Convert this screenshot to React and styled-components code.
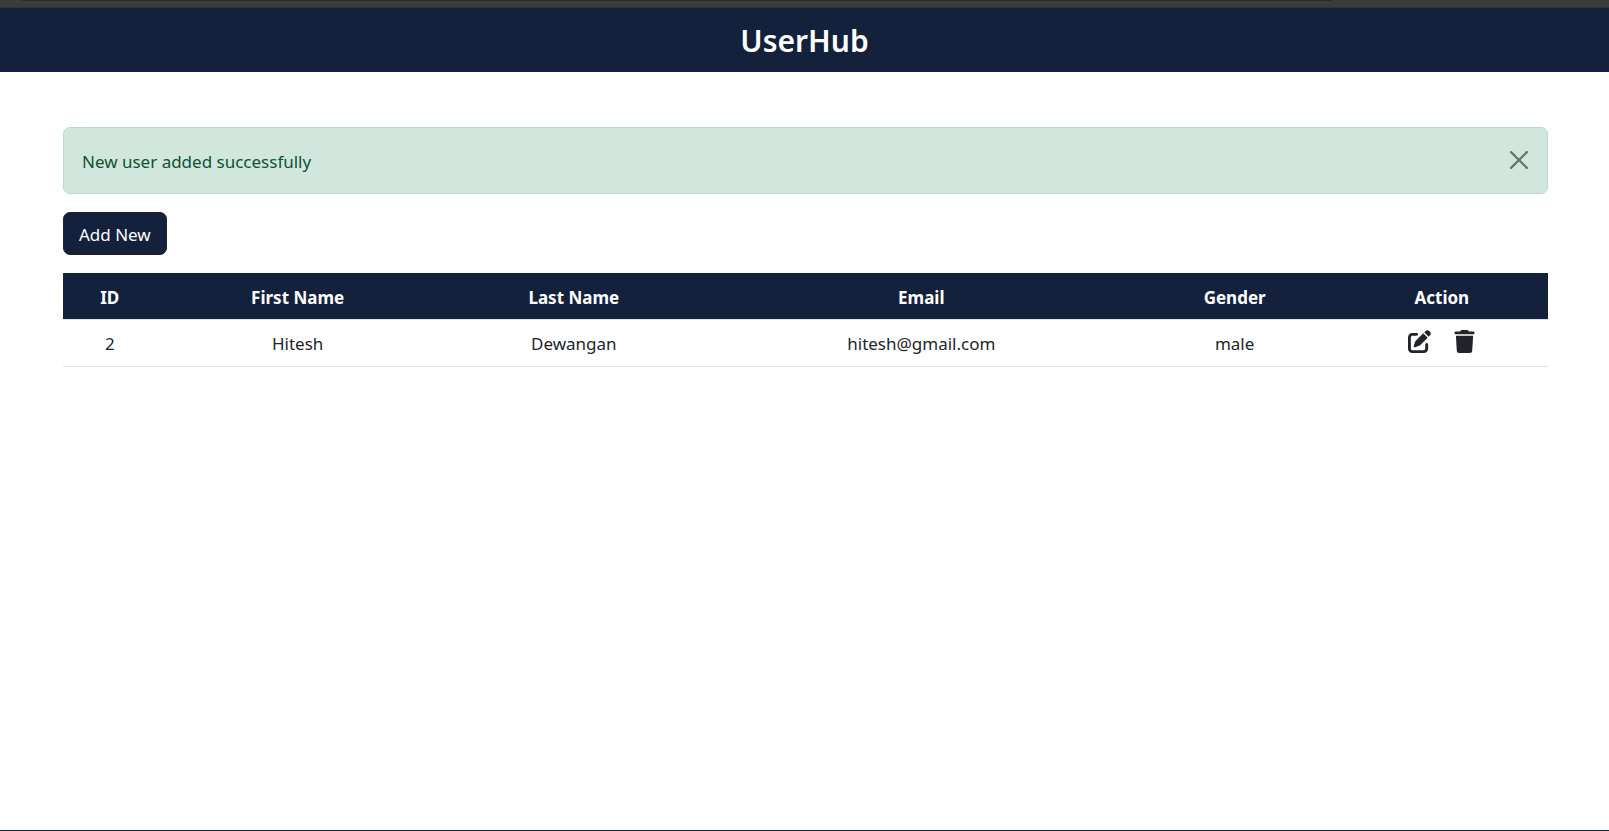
import React, { useState } from "react";
import styled, { createGlobalStyle } from "styled-components";
import { FaPenToSquare, FaTrash } from "react-icons/fa6";

const navy = "#14213d";

const GlobalStyle = createGlobalStyle`
  *, *::before, *::after { box-sizing: border-box; }
  body {
    margin: 0;
    background: #fff;
    color: #212529;
    font-family: "Segoe UI", "Noto Sans", "Open Sans", sans-serif;
    font-size: 17px;
    line-height: 27px;
  }
`;

const Page = styled.div`
  display: flex;
  flex-direction: column;
  min-height: 100vh;
  border-bottom: 1px solid ${navy};
`;

const WindowEdge = styled.div`
  height: 8px;
  background: #3b3b3b;
  border-bottom: 1px solid #2b3436;
`;

const WindowEdgeLine = styled.div`
  height: 1px;
  margin: 0 277px 0 22px;
  background: #2b2b2b;
`;

const Header = styled.header`
  display: flex;
  align-items: center;
  justify-content: center;
  height: 64px;
  padding-top: 2px;
  background: ${navy};
`;

const Title = styled.h1`
  margin: 0;
  color: #fff;
  font-size: 30px;
  font-weight: 600;
  line-height: 40px;
`;

const Content = styled.main`
  display: flex;
  flex-direction: column;
  align-items: flex-start;
  gap: 18px;
  padding: 55px 61px 18px 63px;
`;

const Alert = styled.div`
  display: flex;
  align-items: center;
  justify-content: space-between;
  width: 100%;
  padding: 20px 19px 18px 18px;
  background: #d1e7dd;
  border: 1px solid #badbcc;
  border-radius: 7px;
  color: #0f5132;
`;

const CloseButton = styled.button`
  display: flex;
  margin: 0 0 3px;
  padding: 0;
  border: 0;
  background: none;
  color: #000;
  opacity: 0.5;
  cursor: pointer;
`;

const AddButton = styled.button`
  height: 43px;
  padding: 1px 15px 0;
  background: ${navy};
  border: 1px solid #212529;
  border-radius: 7px;
  color: #fff;
  font: inherit;
  cursor: pointer;
`;

const Table = styled.table`
  width: 100%;
  table-layout: fixed;
  border-collapse: separate;
  border-spacing: 0;
  text-align: center;
`;

const Col = styled.col`
  width: ${({ $share }) => $share}%;
`;

const HeadCell = styled.th`
  height: 47px;
  padding: 2px 9px 0;
  background: ${navy};
  background-clip: padding-box;
  border-bottom: 1px solid #dee2e6;
  color: #fff;
  font-weight: 700;
`;

const Cell = styled.td`
  height: 47px;
  padding: 0 9px;
  border-bottom: 1px solid #dee2e6;
`;

const Actions = styled.div`
  display: flex;
  justify-content: center;
  gap: 22px;
  padding-bottom: 4px;
`;

const ActionButton = styled.button`
  display: flex;
  padding: 0;
  border: 0;
  background: none;
  color: #212529;
  cursor: pointer;

  svg {
    width: auto;
    height: 23px;
  }
`;

const columns = [
  { label: "ID", share: 6.3 },
  { label: "First Name", share: 19 },
  { label: "Last Name", share: 18.2 },
  { label: "Email", share: 28.6 },
  { label: "Gender", share: 13.6 },
  { label: "Action", share: 14.3 },
];

const users = [
  { id: 2, firstName: "Hitesh", lastName: "Dewangan", email: "hitesh@gmail.com", gender: "male" },
];

export default function App() {
  const [alertOpen, setAlertOpen] = useState(true);

  return (
    <>
      <GlobalStyle />
      <Page>
        <WindowEdge>
          <WindowEdgeLine />
        </WindowEdge>
        <Header>
          <Title>UserHub</Title>
        </Header>
        <Content>
          {alertOpen && (
            <Alert role="alert">
              <span>New user added successfully</span>
              <CloseButton type="button" aria-label="Close" onClick={() => setAlertOpen(false)}>
                <svg width="18" height="18" viewBox="0 0 16 16" fill="currentColor" aria-hidden="true">
                  <path d="M.293.293a1 1 0 0 1 1.414 0L8 6.586 14.293.293a1 1 0 1 1 1.414 1.414L9.414 8l6.293 6.293a1 1 0 0 1-1.414 1.414L8 9.414l-6.293 6.293a1 1 0 0 1-1.414-1.414L6.586 8 .293 1.707a1 1 0 0 1 0-1.414z" />
                </svg>
              </CloseButton>
            </Alert>
          )}
          <AddButton type="button">Add New</AddButton>
          <Table>
            <colgroup>
              {columns.map((column) => (
                <Col key={column.label} $share={column.share} />
              ))}
            </colgroup>
            <thead>
              <tr>
                {columns.map((column) => (
                  <HeadCell key={column.label} scope="col">{column.label}</HeadCell>
                ))}
              </tr>
            </thead>
            <tbody>
              {users.map((user) => (
                <tr key={user.id}>
                  <Cell>{user.id}</Cell>
                  <Cell>{user.firstName}</Cell>
                  <Cell>{user.lastName}</Cell>
                  <Cell>{user.email}</Cell>
                  <Cell>{user.gender}</Cell>
                  <Cell>
                    <Actions>
                      <ActionButton type="button" aria-label="Edit"><FaPenToSquare /></ActionButton>
                      <ActionButton type="button" aria-label="Delete"><FaTrash /></ActionButton>
                    </Actions>
                  </Cell>
                </tr>
              ))}
            </tbody>
          </Table>
        </Content>
      </Page>
    </>
  );
}
